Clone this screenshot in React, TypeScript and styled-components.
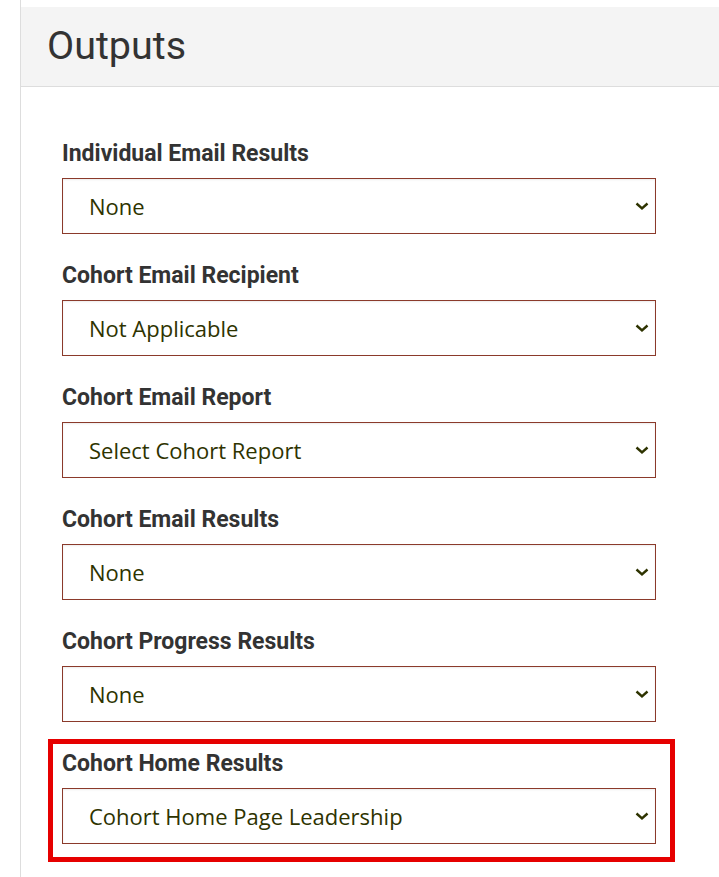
import React from "react";
import styled, { createGlobalStyle } from "styled-components";

const Global = createGlobalStyle`
  html, body { margin: 0; padding: 0; background: #ffffff; }
  body { font-family: Roboto, "Liberation Sans", sans-serif; }
`;

const Page = styled.div`
  margin-left: 20px;
  padding-top: 7px;
  border-left: 1px solid #dddddd;
  min-height: 877px;
  box-sizing: border-box;
`;

const Header = styled.div`
  height: 80px;
  background: #f4f4f4;
  border-bottom: 1px solid #dddddd;
  display: flex;
  align-items: center;
  padding-left: 26px;
  box-sizing: border-box;
`;

const Title = styled.h1`
  margin: 0;
  font-family: Roboto, "Liberation Sans", sans-serif;
  font-weight: 400;
  font-size: 39.5px;
  color: #333333;
  line-height: 1;
  margin-top: -2px;
`;

const Body = styled.div`
  padding: 54px 63px 0 41px;
  display: flex;
  flex-direction: column;
  gap: 29px;
`;

const Field = styled.div<{ $highlight?: boolean }>`
  position: relative;
  display: flex;
  flex-direction: column;
  gap: 11px;
  ${(p) =>
    p.$highlight &&
    `
    &::after {
      content: "";
      position: absolute;
      left: -14px;
      top: -12px;
      right: -19px;
      bottom: -18px;
      border: 5px solid #e60000;
      pointer-events: none;
    }
  `}
`;

const Label = styled.label`
  font-family: Roboto, "Liberation Sans", sans-serif;
  font-weight: 700;
  font-size: 23px;
  line-height: 26px;
  color: #333333;
`;

const SelectBox = styled.div`
  height: 56px;
  box-sizing: border-box;
  border: 1px solid #8b3a2b;
  box-shadow: inset 0 1px 2px rgba(0, 0, 0, 0.075);
  display: flex;
  align-items: center;
  justify-content: space-between;
  padding: 0 6px 0 26px;
  background: #ffffff;
`;

const SelectText = styled.span`
  font-family: "Open Sans", "Noto Sans", sans-serif;
  font-size: 22px;
  color: #2e3300;
`;

const Chevron = () => (
  <svg width="14" height="10" viewBox="0 0 14 10" fill="none">
    <path d="M1.5 2.5 L7 7.5 L12.5 2.5" stroke="#2e3300" strokeWidth="2.4" />
  </svg>
);

const fields = [
  { label: "Individual Email Results", value: "None" },
  { label: "Cohort Email Recipient", value: "Not Applicable" },
  { label: "Cohort Email Report", value: "Select Cohort Report" },
  { label: "Cohort Email Results", value: "None" },
  { label: "Cohort Progress Results", value: "None" },
  { label: "Cohort Home Results", value: "Cohort Home Page Leadership", highlight: true },
];

export default function App() {
  return (
    <>
      <Global />
      <Page>
        <Header>
          <Title>Outputs</Title>
        </Header>
        <Body>
          {fields.map((f) => (
            <Field key={f.label} $highlight={f.highlight}>
              <Label>{f.label}</Label>
              <SelectBox>
                <SelectText>{f.value}</SelectText>
                <Chevron />
              </SelectBox>
            </Field>
          ))}
        </Body>
      </Page>
    </>
  );
}
